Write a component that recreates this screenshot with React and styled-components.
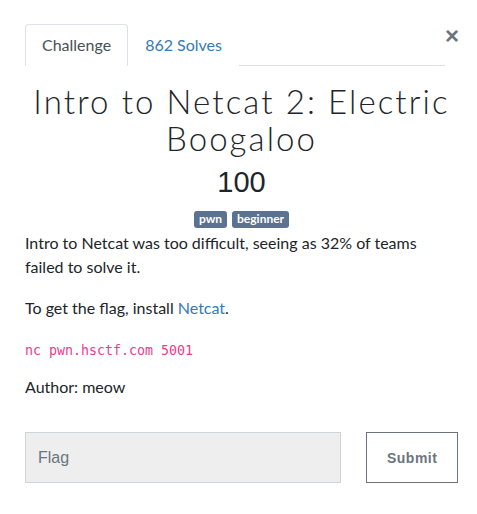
import React, { useState } from "react";
import styled, { createGlobalStyle } from "styled-components";

const GlobalStyle = createGlobalStyle`
  body {
    margin: 0;
    background: #fff;
    font-family: Lato, "Noto Sans", sans-serif;
    color: #212529;
  }
`;

const Modal = styled.div`
  padding: 24px 19px 30px 25px;
`;

const Header = styled.div`
  display: flex;
  align-items: flex-start;
`;

const Tabs = styled.ul`
  display: flex;
  flex: 1;
  list-style: none;
  margin: 0;
  padding: 0;
  border-bottom: 1px solid #dee2e6;
`;

const Tab = styled.li`
  margin-bottom: -1px;
  padding: 8px 16px;
  height: 24px;
  font-size: 16px;
  line-height: 24px;
  border: 1px solid ${(p) => (p.active ? "#dee2e6" : "transparent")};
  border-bottom-color: ${(p) => (p.active ? "#fff" : "transparent")};
  border-radius: 4px 4px 0 0;
  background: #fff;
  color: ${(p) => (p.active ? "#495057" : "#337ab7")};
  cursor: pointer;
`;

const Close = styled.button`
  border: 0;
  background: none;
  padding: 0;
  margin: 2px 0 0 0;
  width: 13px;
  font-size: 24px;
  line-height: 20px;
  font-weight: 700;
  color: #6c757d;
  font-family: "Liberation Sans", sans-serif;
  cursor: pointer;
`;

const Title = styled.h1`
  margin: 17px 0 0;
  text-align: center;
  font-family: Lato, sans-serif;
  font-weight: 300;
  font-size: 33px;
  letter-spacing: 2.1px;
  line-height: 37px;
  color: #212529;
`;

const Points = styled.div`
  margin-top: 8px;
  text-align: center;
  font-family: "Liberation Sans", Arial, sans-serif;
  font-size: 29px;
  line-height: 34px;
`;

const Tags = styled.div`
  display: flex;
  justify-content: center;
  gap: 5px;
  margin-top: 12px;
`;

const Badge = styled.span`
  padding: 2px 5px 3px;
  border-radius: 3px;
  background: #5b7290;
  color: #fff;
  font-size: 12px;
  font-weight: 700;
  line-height: 12px;
`;

const Text = styled.p`
  margin: ${(p) => p.top || 0}px 0 0;
  font-size: 16px;
  line-height: 24px;
`;

const Link = styled.a`
  color: #337ab7;
  text-decoration: none;
`;

const Code = styled.code`
  display: block;
  margin-top: 21px;
  font-family: "DejaVu Sans Mono", monospace;
  font-size: 13.3px;
  line-height: 20px;
  color: #e83e8c;
`;

const Form = styled.form`
  display: flex;
  gap: 25px;
  margin-top: 33px;
`;

const FlagInput = styled.input`
  box-sizing: border-box;
  width: 318px;
  height: 51px;
  padding: 0 12px;
  background: #eeeeee;
  border: 1px solid #ced4da;
  font-family: "Liberation Sans", Arial, sans-serif;
  font-size: 16px;
  color: #495057;
  outline: none;
  &::placeholder {
    color: #6c757d;
  }
`;

const Submit = styled.button`
  box-sizing: border-box;
  width: 92px;
  height: 51px;
  background: #fff;
  border: 1px solid #6c757d;
  font-family: "Liberation Sans", Arial, sans-serif;
  font-weight: 700;
  font-size: 14px;
  letter-spacing: 0.5px;
  color: #6c757d;
  cursor: pointer;
`;

export default function App() {
  const [tab, setTab] = useState("challenge");
  const [flag, setFlag] = useState("");

  return (
    <Modal>
      <GlobalStyle />
      <Header>
        <Tabs>
          <Tab active={tab === "challenge"} onClick={() => setTab("challenge")}>
            Challenge
          </Tab>
          <Tab active={tab === "solves"} onClick={() => setTab("solves")}>
            862 Solves
          </Tab>
        </Tabs>
        <Close aria-label="Close">×</Close>
      </Header>

      <Title>Intro to Netcat 2: Electric Boogaloo</Title>
      <Points>100</Points>
      <Tags>
        <Badge>pwn</Badge>
        <Badge>beginner</Badge>
      </Tags>

      <Text top={3}>
        Intro to Netcat was too difficult, seeing as 32% of teams failed to solve it.
      </Text>
      <Text top={17}>
        To get the flag, install <Link href="#">Netcat</Link>.
      </Text>
      <Code>nc pwn.hsctf.com 5001</Code>
      <Text top={14}>Author: meow</Text>

      <Form onSubmit={(e) => e.preventDefault()}>
        <FlagInput
          placeholder="Flag"
          value={flag}
          onChange={(e) => setFlag(e.target.value)}
        />
        <Submit type="submit">Submit</Submit>
      </Form>
    </Modal>
  );
}
